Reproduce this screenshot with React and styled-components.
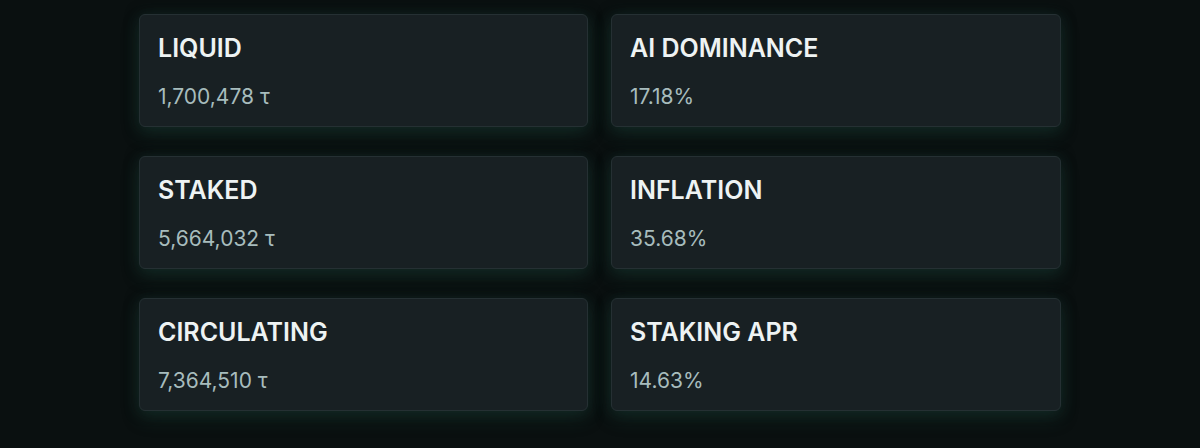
import React from 'react';
import styled, { createGlobalStyle } from 'styled-components';

const GlobalStyle = createGlobalStyle`
  html, body {
    margin: 0;
    padding: 0;
    background: #0a1010;
  }
  body {
    font-family: Inter, "Noto Sans", sans-serif;
  }
`;

const Page = styled.div`
  width: 1200px;
  height: 448px;
  display: flex;
  justify-content: center;
  padding-top: 14px;
  box-sizing: border-box;
  background: #0a1010;
`;

const Grid = styled.div`
  width: 922px;
  display: grid;
  grid-template-columns: 449px 450px;
  grid-auto-rows: 113px;
  column-gap: 23px;
  row-gap: 29px;
`;

const Card = styled.div`
  box-sizing: border-box;
  background: #182023;
  border: 1px solid #253033;
  border-radius: 6px;
  padding: 18px 18px 0;
  box-shadow: 0 8px 18px rgba(30, 75, 62, 0.3), 0 0 14px rgba(20, 40, 38, 0.6);
  display: flex;
  flex-direction: column;
`;

const Title = styled.div`
  color: #eef3f3;
  font-size: 25px;
  font-weight: 600;
  line-height: 30px;
`;

const Value = styled.div`
  margin-top: 21px;
  color: #a7bcbd;
  font-size: 21px;
  font-weight: 400;
  line-height: 25px;
`;

const stats = [
  ['LIQUID', '1,700,478 τ'],
  ['AI DOMINANCE', '17.18%'],
  ['STAKED', '5,664,032 τ'],
  ['INFLATION', '35.68%'],
  ['CIRCULATING', '7,364,510 τ'],
  ['STAKING APR', '14.63%'],
];

export default function App() {
  return (
    <>
      <GlobalStyle />
      <Page>
        <Grid>
          {stats.map(([label, value]) => (
            <Card key={label}>
              <Title>{label}</Title>
              <Value>{value}</Value>
            </Card>
          ))}
        </Grid>
      </Page>
    </>
  );
}
